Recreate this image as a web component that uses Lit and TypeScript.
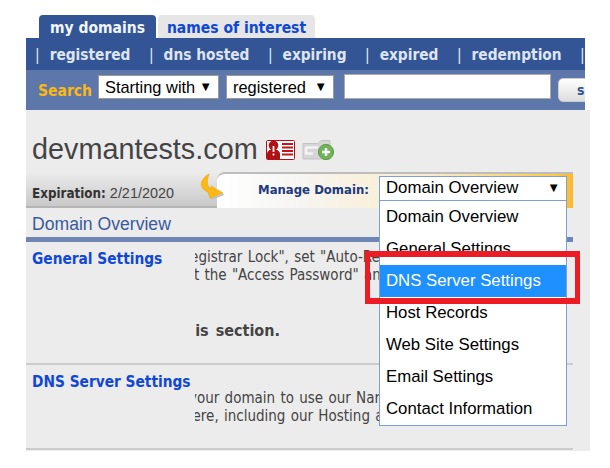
import { LitElement, html, css } from "lit";
import { customElement } from "lit/decorators.js";

const NAV = ["registered", "dns hosted", "expiring", "expired", "redemption"];
const OPTIONS = ["Domain Overview", "General Settings", "DNS Server Settings", "Host Records", "Web Site Settings", "Email Settings", "Contact Information"];

@customElement("app-root")
export class AppRoot extends LitElement {
  static styles = css`
    :host { display: block; width: 610px; height: 468px; background: #fff; overflow: hidden; font-family: "Liberation Sans", Arial, sans-serif; }
    .page { position: relative; padding: 15px 0 0 26px; }
    .verd { font-family: "DejaVu Sans Condensed", "DejaVu Sans", sans-serif; font-stretch: condensed; }
    .tabs { display: flex; gap: 2px; margin-left: 13px; height: 23px; }
    .tab { border-radius: 4px 4px 0 0; font-weight: 700; font-size: 15.5px; line-height: 26px; text-align: center; }
    .tab.on { width: 117px; background: #335595; color: #f2f6ff; }
    .tab.off { width: 157px; background: #e6e6e6; color: #0f47d6; }
    .nav { width: 559px; height: 32px; box-sizing: border-box; background: #335595; color: #dfe5f0; display: flex; align-items: center; padding: 2px 0 0 9px; font-weight: 700; font-size: 15.3px; white-space: nowrap; }
    .nav-item { display: flex; gap: 10px; margin-right: 18.5px; }
    .sep { font-weight: 400; color: #e6eaf3; }
    .search { width: 559px; height: 40px; box-sizing: border-box; background: #5d77ab; display: flex; align-items: flex-start; padding: 5px 0 0 12px; overflow: hidden; }
    .search-label { color: #fdb813; font-weight: 700; font-size: 15.5px; line-height: 32px; width: 60px; flex: none; }
    .sel { box-sizing: border-box; height: 24px; background: #fff; border: 1px solid #999; font-size: 16.4px; line-height: 22px; color: #000; display: flex; justify-content: space-between; padding: 0 6px 0 6px; flex: none; }
    .caret { font-size: 13px; }
    .sel.a { width: 121px; margin-right: 7px; }
    .sel.b { width: 108px; margin-right: 10px; }
    .input { box-sizing: border-box; width: 207px; height: 25px; margin-top: -1px; background: #fff; border: 1px solid #aaa; flex: none; }
    .btn { box-sizing: border-box; width: 60px; height: 24px; margin: 3px 0 0 7px; border-radius: 5px; background: linear-gradient(#fff, #ddd); border: 1px solid #ccc; color: #335595; font-weight: 700; font-size: 14px; line-height: 22px; padding-left: 18px; flex: none; }
    .panel { width: 564px; height: 341px; background: #ececec; }
    .inner { width: 547px; }
    .title { display: flex; align-items: flex-start; height: 62px; padding: 0 0 0 6px; }
    .title h1 { margin: 21px 0 0; font-weight: 400; font-size: 28.8px; line-height: 36px; color: #444; }
    .icon-a { margin: 30px 0 0 8px; }
    .icon-b { margin: 30px 0 0 7px; }
    .strip { display: flex; height: 36px; }
    .exp { width: 172px; box-sizing: border-box; padding: 12px 0 0 6px; font-size: 14.4px; color: #444; background: linear-gradient(#ececec, #c9c9c9); border-bottom: 2px solid #b5b5b5; line-height: 18px; white-space: nowrap; }
    .exp b { color: #333; font-family: "DejaVu Sans Condensed", sans-serif; font-size: 13.3px; }
    .arrow { position: relative; z-index: 1; width: 19px; background: linear-gradient(#ececec, #c9c9c9); border-bottom: 2px solid #b5b5b5; box-sizing: border-box; flex: none; }
    .arrow svg { display: block; margin: 2px 0 0 1px; overflow: visible; }
    .manage { flex: 1; box-sizing: border-box; border-top: 2px solid #bdbdbd; border-radius: 8px 0 0 0; background: linear-gradient(90deg, #fff 0%, #f6f6f4 20%, #fbeccb 60%, #fdc94a 95%, #fbb92b 100%); padding: 6px 0 0 41px; font-weight: 700; font-size: 13px; line-height: 19px; color: #203a7c; font-family: "DejaVu Sans Condensed", sans-serif; }
    .overview { height: 29px; padding-left: 6px; font-size: 17.6px; line-height: 33px; color: #3a5a9c; border-bottom: 5px solid #6f86b5; }
    .row { border-bottom: 2px solid #ccc; display: flex; box-sizing: border-box; }
    .row.one { height: 123px; }
    .row.two { height: 85px; }
    .name { width: 169px; flex: none; padding: 8px 0 0 6px; font-weight: 700; font-size: 15.3px; color: #0f47d6; white-space: nowrap; box-sizing: border-box; }
    .desc { overflow: hidden; flex: 1; color: #444; font-size: 15px; line-height: 18px; white-space: nowrap; word-spacing: 1px; }
    .row.one .desc { padding-top: 6px; }
    .row.two .desc { padding-top: 24px; }
    .l1 { margin-left: -99px; }
    .l2 { margin-left: -18px; }
    .l3 { margin-left: -17px; }
    .l4 { margin-left: -6px; }
    .l5 { margin-left: -11px; }
    .bold { margin-top: 37px; font-weight: 700; font-size: 16px; line-height: 20px; word-spacing: 2px; }
    .drop { position: absolute; left: 379px; top: 176px; width: 188px; }
    .drop-head { box-sizing: border-box; height: 25px; background: #fff; border: 1px solid #7b9fd6; font-size: 16.8px; line-height: 22px; padding: 0 6px; color: #000; display: flex; justify-content: space-between; }
    .drop-list { box-sizing: border-box; background: #fff; border: 1px solid #7b9fd6; border-top: 0; height: 225px; }
    .opt { height: 32px; line-height: 32px; padding: 0 6px; font-size: 16.8px; color: #000; white-space: nowrap; }
    .opt.hl { background: #1e90ff; color: #fff; }
    .callout { position: absolute; left: 365px; top: 251px; width: 215px; height: 53px; box-sizing: border-box; border: solid #ed1c24; border-width: 6px 5px; }
  `;

  render() {
    return html`
      <div class="page">
        <div class="tabs verd">
          <div class="tab on">my domains</div>
          <div class="tab off">names of interest</div>
        </div>
        <div class="nav verd">
          ${NAV.map((n) => html`<div class="nav-item"><span class="sep">|</span><span>${n}</span></div>`)}
          <span class="sep">|</span>
        </div>
        <div class="search">
          <div class="search-label verd">Search</div>
          <div class="sel a"><span>Starting with</span><span class="caret">▼</span></div>
          <div class="sel b"><span>registered</span><span class="caret">▼</span></div>
          <div class="input"></div>
          <div class="btn verd">s</div>
        </div>
        <div class="panel">
          <div class="inner">
            <div class="title">
              <h1>devmantests.com</h1>
              <svg class="icon-a" width="29" height="20" viewBox="0 0 29 20">
                <rect x="0.5" y="0.5" width="28" height="19" rx="1" fill="#fff" stroke="#b01116"/>
                <path d="M1 19V14q0-3 4-4.500a4.800 4.800 0 1 1 5 0q4 1.500 4 4.500v5z" fill="#b01116"/>
                <rect x="6.600" y="6" width="1.800" height="6" fill="#fff"/><rect x="6.600" y="13.500" width="1.800" height="2" fill="#fff"/>
                <path d="M16 4h11M16 7.500h11M16 11h11M16 14.500h11" stroke="#c0161c" stroke-width="2"/>
              </svg>
              <svg class="icon-b" width="32" height="22" viewBox="0 0 32 22">
                <path d="M1 3.500h15l3-3h9v18.500H1z" fill="#d6d6d6" stroke="#c4c4c4"/>
                <path d="M4 7.500h12M4 7.500v6h7" stroke="#f4f4f4" stroke-width="2.500" fill="none"/>
                <circle cx="24" cy="12" r="7.600" fill="#6fb35a" stroke="#5a9a49"/>
                <path d="M20 12h8M24 8v8" stroke="#fff" stroke-width="2.400"/>
              </svg>
            </div>
            <div class="strip">
              <div class="exp"><b>Expiration:</b> 2/21/2020</div>
              <div class="arrow">
                <svg width="26" height="26" viewBox="0 0 26 26">
                  <path d="M10 0C1 5-1 14 9 18l2 6 13-5-12-7 0 3c-5-3-4-9-2-15z" fill="#fdb813" stroke="#e8a510" stroke-width=".6"/>
                  <path d="M12 24.500l12-5 1 1.500-12 4.500z" fill="#b9b9b9"/>
                </svg>
              </div>
              <div class="manage">Manage Domain:</div>
            </div>
            <div class="overview">Domain Overview</div>
            <div class="row one">
              <div class="name verd">General Settings</div>
              <div class="desc verd">
                <div class="l1">To lock the "Registrar Lock", set "Auto-Renew" and</div>
                <div class="l2">Set the "Access Password" and other options here</div>
                <div class="l3 bold">this section.</div>
              </div>
            </div>
            <div class="row two">
              <div class="name verd">DNS Server Settings</div>
              <div class="desc verd">
                <div class="l4">your domain to use our Name Servers</div>
                <div class="l5">here, including our Hosting and more</div>
              </div>
            </div>
          </div>
        </div>
        <div class="drop">
          <div class="drop-head"><span>Domain Overview</span><span class="caret">▼</span></div>
          <div class="drop-list">
            ${OPTIONS.map((o, i) => html`<div class="opt ${i === 2 ? "hl" : ""}">${o}</div>`)}
          </div>
        </div>
        <div class="callout"></div>
      </div>
    `;
  }
}
